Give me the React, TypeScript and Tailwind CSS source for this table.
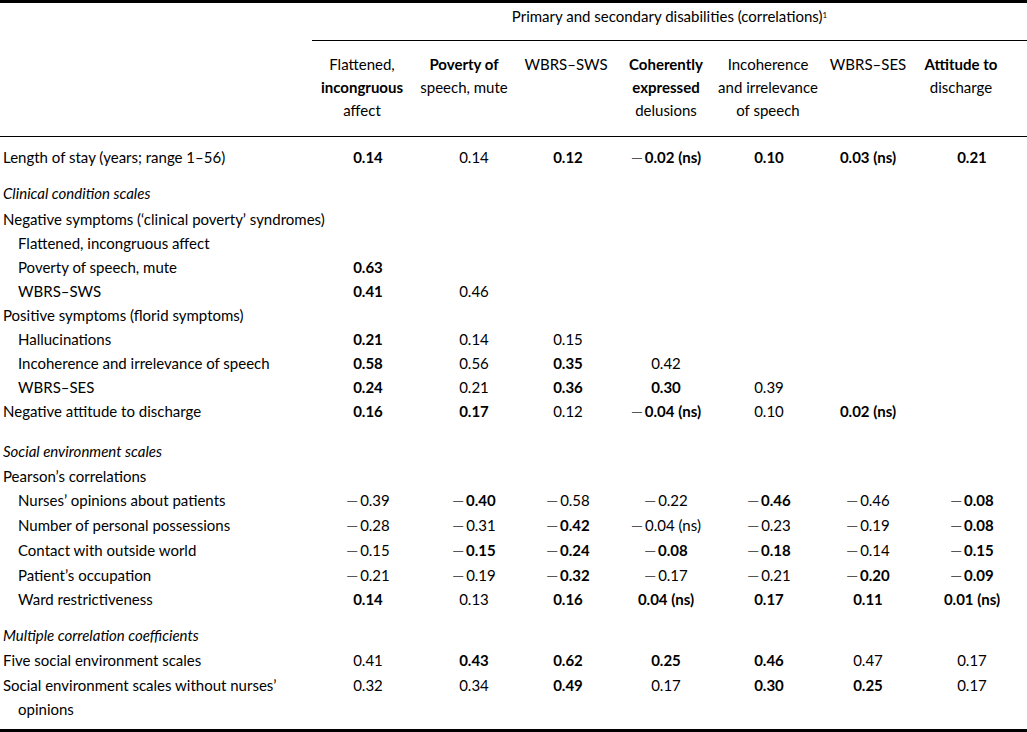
type Cell = { v: string; b?: boolean } | null;

type Row = {
  label: string;
  kind?: 'section' | 'group' | 'item';
  cls: string;
  cells?: Cell[];
};

const cols = [
  { head: ['Flattened,', 'incongruous', 'affect'], num: 'pl-[12px]' },
  { head: ['Poverty of', 'speech, mute'], num: 'pl-[20px]' },
  { head: ['WBRS–SWS'], num: 'pl-[4px]' },
  { head: ['Coherently', 'expressed', 'delusions'], num: '' },
  { head: ['Incoherence', 'and irrelevance', 'of speech'], num: 'pl-[2px]' },
  { head: ['WBRS–SES'], num: '' },
  { head: ['Attitude to', 'discharge'], num: 'pl-[22px]' },
];

const boldHead = ['Poverty of', 'Coherently', 'expressed', 'Attitude to', 'incongruous'];

const c = (v: string, b = false): Cell => ({ v, b });

const rows: Row[] = [
  {
    label: 'Length of stay (years; range 1–56)',
    cls: 'mt-[8px]',
    cells: [c('0.14', true), c('0.14'), c('0.12', true), c('−0.02 (ns)', true), c('0.10', true), c('0.03 (ns)', true), c('0.21', true)],
  },
  { label: 'Clinical condition scales', kind: 'section', cls: 'mt-[12px]' },
  { label: 'Negative symptoms (‘clinical poverty’ syndromes)', kind: 'group', cls: 'mt-[2px]' },
  { label: 'Flattened, incongruous affect', kind: 'item', cls: '', cells: [] },
  { label: 'Poverty of speech, mute', kind: 'item', cls: '', cells: [c('0.63', true)] },
  { label: 'WBRS–SWS', kind: 'item', cls: '', cells: [c('0.41', true), c('0.46')] },
  { label: 'Positive symptoms (florid symptoms)', kind: 'group', cls: '' },
  { label: 'Hallucinations', kind: 'item', cls: '', cells: [c('0.21', true), c('0.14'), c('0.15')] },
  {
    label: 'Incoherence and irrelevance of speech',
    kind: 'item',
    cls: '',
    cells: [c('0.58', true), c('0.56'), c('0.35', true), c('0.42')],
  },
  {
    label: 'WBRS–SES',
    kind: 'item',
    cls: '',
    cells: [c('0.24', true), c('0.21'), c('0.36', true), c('0.30', true), c('0.39')],
  },
  {
    label: 'Negative attitude to discharge',
    cls: '',
    cells: [c('0.16', true), c('0.17', true), c('0.12'), c('−0.04 (ns)', true), c('0.10'), c('0.02 (ns)', true)],
  },
  { label: 'Social environment scales', kind: 'section', cls: 'mt-[16px]' },
  { label: 'Pearson’s correlations', kind: 'group', cls: 'mt-[1px]' },
  {
    label: 'Nurses’ opinions about patients',
    kind: 'item',
    cls: '',
    cells: [c('−0.39'), c('−0.40', true), c('−0.58'), c('−0.22'), c('−0.46', true), c('−0.46'), c('−0.08', true)],
  },
  {
    label: 'Number of personal possessions',
    kind: 'item',
    cls: 'mt-[1px]',
    cells: [c('−0.28'), c('−0.31'), c('−0.42', true), c('−0.04 (ns)'), c('−0.23'), c('−0.19'), c('−0.08', true)],
  },
  {
    label: 'Contact with outside world',
    kind: 'item',
    cls: 'mt-[1px]',
    cells: [c('−0.15'), c('−0.15', true), c('−0.24', true), c('−0.08', true), c('−0.18', true), c('−0.14'), c('−0.15', true)],
  },
  {
    label: 'Patient’s occupation',
    kind: 'item',
    cls: 'mt-[1px]',
    cells: [c('−0.21'), c('−0.19'), c('−0.32', true), c('−0.17'), c('−0.21'), c('−0.20', true), c('−0.09', true)],
  },
  {
    label: 'Ward restrictiveness',
    kind: 'item',
    cls: '',
    cells: [c('0.14', true), c('0.13'), c('0.16', true), c('0.04 (ns)', true), c('0.17', true), c('0.11', true), c('0.01 (ns)', true)],
  },
  { label: 'Multiple correlation coefficients', kind: 'section', cls: 'mt-[12px]' },
  {
    label: 'Five social environment scales',
    cls: 'mt-[1px]',
    cells: [c('0.41'), c('0.43', true), c('0.62', true), c('0.25', true), c('0.46', true), c('0.47'), c('0.17')],
  },
  {
    label: 'Social environment scales without nurses’',
    cls: 'mt-[1px]',
    cells: [c('0.32'), c('0.34'), c('0.49', true), c('0.17'), c('0.30', true), c('0.25', true), c('0.17')],
  },
  { label: 'opinions', kind: 'item', cls: '' },
];

const grid = 'grid grid-cols-[312px_100px_104px_100px_100px_104px_96px_90px_1fr]';

function Num({ cell }: { cell: Cell }) {
  if (!cell) return null;
  const neg = cell.v.startsWith('−');
  const body = neg ? cell.v.slice(1) : cell.v;
  return (
    <span className={`whitespace-nowrap ${cell.b ? 'font-bold' : ''}`}>
      {neg && <span className="mr-[2px] font-normal text-[#555]">—</span>}
      {body}
    </span>
  );
}

export default function App() {
  return (
    <div
      className="w-[1027px] h-[732px] bg-white text-black text-[15px] border-t-[3px] border-black"
      style={{ fontFamily: 'Lato, "Open Sans", sans-serif' }}
    >
      {/* group header */}
      <div className={grid}>
        <div />
        <div className="col-span-8 h-[38px] pt-[1px] border-b border-black flex justify-center leading-6">
          <span>
            Primary and secondary disabilities (correlations)
            <sup className="text-[8px]">1</sup>
          </span>
        </div>
      </div>

      {/* column headers */}
      <div className={`${grid} border-b border-black h-[96px] pt-[12px]`}>
        <div />
        {cols.map((col, i) => (
          <div key={i} className="flex flex-col items-center leading-[23px]">
            {col.head.map((h) => (
              <span key={h} className={`whitespace-nowrap ${boldHead.includes(h) ? 'font-bold' : ''}`}>
                {h}
              </span>
            ))}
          </div>
        ))}
      </div>

      {/* body */}
      <div className="pb-2">
        {rows.map((r, ri) => (
          <div key={ri} className={`${grid} h-6 leading-6 ${r.cls}`}>
            <div
              className={`whitespace-nowrap ${r.kind === 'item' ? 'pl-[18px]' : 'pl-[3px]'} ${
                r.kind === 'section' ? 'italic' : ''
              }`}
            >
              {r.label}
            </div>
            {r.cells &&
              cols.map((col, ci) => (
                <div key={ci} className={`flex justify-center ${col.num}`}>
                  <Num cell={r.cells![ci] ?? null} />
                </div>
              ))}
          </div>
        ))}
      </div>
      <div className="border-t-[4px] border-black" />
    </div>
  );
}
